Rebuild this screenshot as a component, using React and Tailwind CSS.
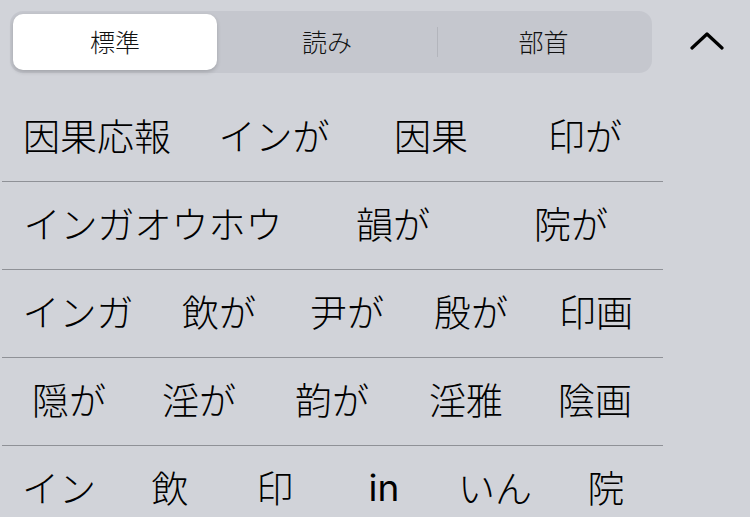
import React from "react";

const rows = [
  [
    ["因果応報", "w-[194px]"],
    ["インが", "w-[160px]"],
    ["因果", "w-[154px]"],
    ["印が", "w-[154px]"],
  ],
  [
    ["インガオウホウ", "w-[306px]"],
    ["韻が", "w-[174px]"],
    ["院が", "w-[182px]"],
  ],
  [
    ["インガ", "w-[156px]"],
    ["飲が", "w-[126px]"],
    ["尹が", "w-[130px]"],
    ["殷が", "w-[118px]"],
    ["印画", "w-[132px]"],
  ],
  [
    ["隠が", "w-[138px]"],
    ["淫が", "w-[122px]"],
    ["韵が", "w-[144px]"],
    ["淫雅", "w-[124px]"],
    ["陰画", "w-[134px]"],
  ],
  [
    ["イン", "w-[118px]"],
    ["飲", "w-[104px]"],
    ["印", "w-[106px]"],
    ["in", "w-[112px] font-normal font-['Inter',sans-serif]"],
    ["いん", "w-[110px]"],
    ["院", "w-[112px]"],
  ],
];

function Segmented() {
  return (
    <div className="flex items-center w-[642px] h-[62px] rounded-[13px] bg-[#c5c7ce] p-[3px]">
      <div className="w-[204px] h-[56px] rounded-[10px] bg-white shadow-[0_2px_4px_rgba(0,0,0,0.18)] flex items-center justify-center text-[25px] text-[#111]">
        標準
      </div>
      <div className="flex-1 h-full flex items-center justify-center text-[25px] text-[#111]">
        読み
      </div>
      <div className="w-px h-[30px] bg-[#b3b5bc]" />
      <div className="w-[211px] h-full flex items-center justify-center text-[25px] text-[#111]">
        部首
      </div>
    </div>
  );
}

export default function App() {
  return (
    <div className="w-[750px] h-[517px] overflow-hidden bg-[#d1d3d9] text-black font-light font-['Noto_Sans_CJK_JP','Noto_Sans',sans-serif]">
      <div className="h-[94px] flex items-start pt-[11px] pl-[10px]">
        <Segmented />
        <div className="ml-[38px] mt-[21px]">
          <svg width="34" height="18" viewBox="0 0 34 18">
            <polyline
              points="2,16 17,2 32,16"
              fill="none"
              stroke="#000"
              strokeWidth="3.2"
              strokeLinecap="round"
              strokeLinejoin="round"
            />
          </svg>
        </div>
      </div>

      {rows.map((row, i) => (
        <div key={i}>
          <div className="h-[87px] flex items-center pb-[4px]">
            {row.map(([text, w]) => (
              <div
                key={text}
                className={`${w} flex justify-center text-[37px] leading-none whitespace-nowrap`}
              >
                {text}
              </div>
            ))}
          </div>
          {i < rows.length - 1 && <div className="ml-[2px] w-[661px] h-px bg-[#8f9197]" />}
        </div>
      ))}
    </div>
  );
}
